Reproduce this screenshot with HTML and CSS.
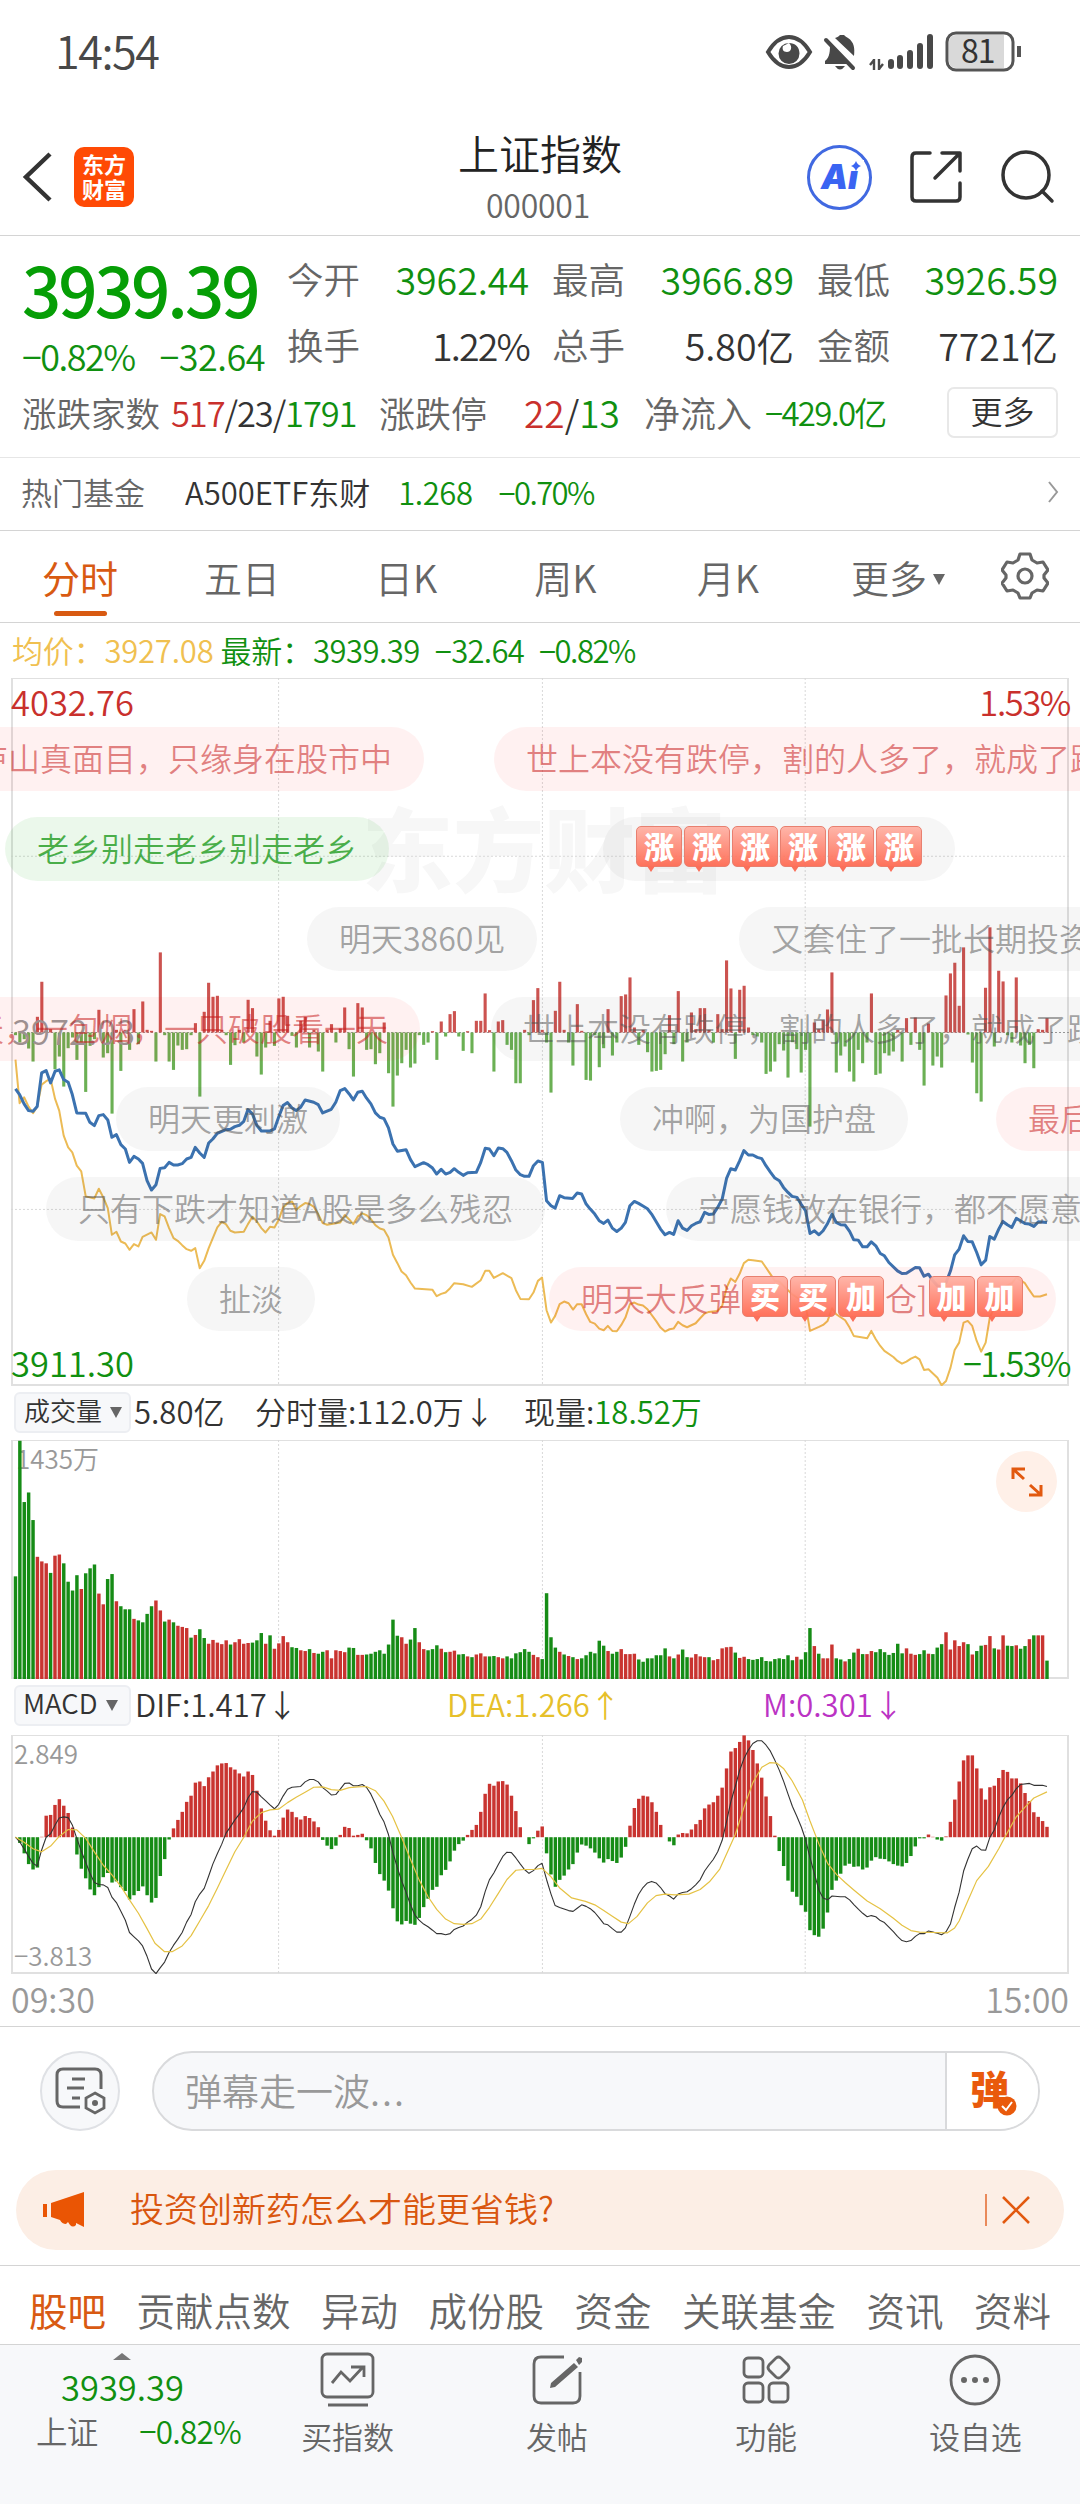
FILE: index.html
```html
<!DOCTYPE html>
<html lang="zh-CN">
<head>
    <meta charset="UTF-8">
    <meta name="viewport" content="width=device-width, initial-scale=1.0">
    <title>上证指数</title>

    <link rel="stylesheet" href="styles.css">
</head>
<body>
    <div class="status">
        <span class="clock">14:54</span>
        <svg class="status-icons" width="260" height="48" viewBox="0 0 260 48">
            <path d="M3 23Q12 8 24 8T45 23Q36 38 24 38T3 23Z" fill="none" stroke="#484848" stroke-width="4"/>
            <path d="M24 14a10.500 10.500 0 1 0 10.500 10.500C34.500 18 30 14 24 14c4 4 2 9-2 9s-5-3-4-6" fill="#484848"/>
            <path d="M65 14l21 21H60v-3c5-4 5-10 5-18zM70 9c2-1 3-1 5-3h4c2 2 3 2 4 3 6 4 7 10 6 18zM70 37h10q-5 7-10 0z" fill="#484848"/>
            <path d="M61 11l27 28" stroke="#484848" stroke-width="4" stroke-linecap="round"/>
            <path d="M109 30v11M109 31l-4 5M114 30v11M114 40l4-5" fill="none" stroke="#484848" stroke-width="2.400"/>
            <path d="M126 33v4M135 29v8M145 24v13M155 17v20M165 8v29" stroke="#484848" stroke-width="6" stroke-linecap="round"/>
            <rect x="182" y="4" width="66" height="37" rx="9" fill="#fff" stroke="#555" stroke-width="3"/>
            <path d="M191 6h48v33h-48q-7 0-7-7V13q0-7 7-7z" fill="#d9d9d9"/>
            <path d="M254 17v11" stroke="#555" stroke-width="4"/>
        </svg>
        <span class="battery">81</span>
    </div>

    <div class="header">
        <svg class="back" width="32" height="52" viewBox="0 0 32 52"><path d="M28 3L4 26l24 23" fill="none" stroke="#333" stroke-width="4.500"/></svg>
        <div class="logo">东方<br>财富</div>
        <div class="title">
            <h1>上证指数</h1>
            <p>000001</p>
        </div>
        <div class="actions">
            <div class="ai">Ai<svg width="16" height="14" viewBox="0 0 16 14"><path d="M0 0h16v11H0z" fill="#fff"/><path d="M8 1q1.500 4 5 5-3.500 1-5 5-1.500-4-5-5 3.500-1 5-5z" fill="#3a64f2"/></svg></div>
            <svg class="share" width="56" height="56" viewBox="0 0 56 56"><path d="M22 4H8q-4 0-4 4v40q0 4 4 4h40q4 0 4-4V34M34 4h18v18M52 4L27 29" fill="none" stroke="#333" stroke-width="3.500" stroke-linecap="round" stroke-linejoin="round"/></svg>
            <svg class="search" width="56" height="56" viewBox="0 0 56 56"><circle cx="26" cy="26" r="23" fill="none" stroke="#333" stroke-width="3.500"/><path d="M42 42l10 10" stroke="#333" stroke-width="3.500" stroke-linecap="round"/></svg>
        </div>
    </div>

    <div class="quote">
        <div class="quote-top">
            <div class="now">
                <div class="price">3939.39</div>
                <div class="change"><span>−0.82%</span><span>−32.64</span></div>
            </div>
            <div class="stats">
                <div class="stat"><label>今开</label><b class="green">3962.44</b></div>
                <div class="stat"><label>最高</label><b class="green">3966.89</b></div>
                <div class="stat"><label>最低</label><b class="green">3926.59</b></div>
                <div class="stat"><label>换手</label><b class="rate">1.22%</b></div>
                <div class="stat"><label>总手</label><b>5.80亿</b></div>
                <div class="stat"><label>金额</label><b>7721亿</b></div>
            </div>
        </div>
        <div class="breadth">
            <label class="b-label">涨跌家数</label>
            <span class="b-count"><i class="red">517</i>/23/<i class="green">1791</i></span>
            <label class="b-stop">涨跌停</label>
            <span class="b-limit"><i class="red">22</i>/<i class="green">13</i></span>
            <label class="b-flow">净流入</label>
            <span class="b-net green">−429.0亿</span>
            <button class="more">更多</button>
        </div>
    </div>

    <div class="fund">
        <label>热门基金</label>
        <span class="fund-name">A500ETF东财</span>
        <span class="fund-price green">1.268</span>
        <span class="fund-rate green">−0.70%</span>
        <svg class="arrow" width="12" height="22" viewBox="0 0 12 22"><path d="M2 1l8 10-8 10" fill="none" stroke="#999" stroke-width="2"/></svg>
    </div>

    <div class="periods">
        <span class="period active">分时</span>
        <span class="period">五日</span>
        <span class="period">日K</span>
        <span class="period">周K</span>
        <span class="period">月K</span>
        <span class="period with-caret">更多<i class="caret"></i></span>
        <svg class="gear" width="48" height="48" viewBox="0 0 48 48">
            <path d="M19 2h10l2 6 5 3 6-1 5 8-4 5v3l4 5-5 8-6-1-5 3-2 5H19l-2-5-5-3-6 1-5-8 4-5v-3l-4-5 5-8 6 1 5-3z" fill="none" stroke="#666" stroke-width="3.200" stroke-linejoin="round"/>
            <circle cx="24" cy="24" r="7" fill="none" stroke="#666" stroke-width="3.200"/>
        </svg>
    </div>

    <div class="legend">
        <span class="avg">均价：</span><span class="avg avg-num">3927.08</span>
        <span class="green">最新：</span><span class="green last-num">3939.39</span><span class="green last-diff">−32.64</span><span class="green last-rate">−0.82%</span>
    </div>

    <div class="chart main-chart">
        <div class="watermark">东方财富</div>
        <svg id="trend" viewBox="32 -1056 3072 2121" preserveAspectRatio="none"></svg>
        <span class="tl red">4032.76</span>
        <span class="tr red">1.53%</span>
        <span class="ml">3972.03</span>
        <span class="bl green">3911.30</span>
        <span class="br green">−1.53%</span>
        <div class="barrage" id="barrage"></div>
    </div>

    <div class="indicator">
        <span class="select">成交量<i class="caret"></i></span>
        <span class="v1">5.80亿</span>
        <span class="v2">分时量:112.0万↓</span>
        <span>现量:<i class="green">18.52万</i></span>
    </div>
    <div class="chart vol-chart">
        <span class="tl">1435万</span>
        <svg id="volume" viewBox="32 26 3072 624" preserveAspectRatio="none"></svg>
        <div class="expand"><svg width="32" height="32" viewBox="0 0 32 32"><path d="M2 13V3h12M3 4l10 9M30 19v10H18M29 28l-10-9" fill="none" stroke="#e2590f" stroke-width="3"/></svg></div>
    </div>

    <div class="indicator macd">
        <span class="select">MACD<i class="caret"></i></span>
        <span class="m1">DIF:1.417↓</span>
        <span class="m2">DEA:1.266↑</span>
        <span class="m3">M:0.301↓</span>
    </div>
    <div class="chart macd-chart">
        <svg id="macd" viewBox="32 796 3072 622" preserveAspectRatio="none"></svg>
        <span class="tl">2.849</span>
        <span class="bl">−3.813</span>
    </div>
    <div class="times"><span>09:30</span><span>15:00</span></div>

    <div class="compose">
        <div class="setting">
            <svg width="52" height="50" viewBox="0 0 52 50">
                <path d="M26 41H9q-6 0-6-6V9q0-6 6-6h32q6 0 6 6v14" fill="none" stroke="#666" stroke-width="3"/>
                <path d="M18 13h13M13 22h17M18 32h8" stroke="#666" stroke-width="3"/>
                <path d="M41 27l9 5v10l-9 5-9-5V32z" fill="none" stroke="#666" stroke-width="2.800"/><circle cx="41" cy="37" r="3" fill="#666"/>
            </svg>
        </div>
        <div class="input">
            <span>弹幕走一波<i class="dots">...</i></span>
            <div class="toggle">弹<svg width="20" height="20" viewBox="0 0 20 20"><circle cx="10" cy="10" r="9.500" fill="#e95a0c"/><path d="M5 10l4 4 6-8" fill="none" stroke="#fff" stroke-width="2"/></svg></div>
        </div>
    </div>

    <div class="notice">
        <svg width="42" height="36" viewBox="0 0 42 36"><path d="M0 12h4v13H0zM8 11L41 0v35l-8-4v2q-3 3-6 0l-2-3-2 2q-4 0-6-4l-9-3z" fill="#ea5504"/></svg>
        <span class="notice-text">投资创新药怎么才能更省钱?</span>
        <span class="notice-line"></span>
        <svg width="30" height="30" viewBox="0 0 30 30"><path d="M2 2l26 26M28 2L2 28" stroke="#e2590f" stroke-width="2.600"/></svg>
    </div>

    <div class="boards">
        <span class="active">股吧</span><span>贡献点数</span><span>异动</span><span>成份股</span><span>资金</span><span>关联基金</span><span>资讯</span><span>资料</span>
    </div>

    <div class="footer">
        <div class="index">
            <i class="up"></i>
            <div class="index-price">3939.39</div>
            <div class="index-row"><span>上证</span><span class="green">−0.82%</span></div>
        </div>
        <div class="nav">
            <svg width="56" height="56" viewBox="0 0 56 56"><rect x="2" y="2" width="51" height="43" rx="5"/><path d="M8 53h40M12 31l9-11 9 9 13-14M31 15h13v10"/></svg>
            <span>买指数</span>
        </div>
        <div class="nav">
            <svg width="56" height="56" viewBox="0 0 56 56"><path d="M35 5H12q-7 0-7 7v32q0 7 7 7h32q7 0 7-7V20"/><path class="fill" d="M45 11l4 4-23 20-5 1 1-5zM47 8l3-3 3 1v4l-3 3z"/></svg>
            <span>发帖</span>
        </div>
        <div class="nav">
            <svg width="56" height="56" viewBox="0 0 56 56"><rect x="6" y="6" width="19" height="19" rx="4"/><rect x="6" y="31" width="19" height="19" rx="4"/><rect x="31" y="31" width="19" height="19" rx="4"/><path d="M38 6q2.500-2 5 0l7 7q2 2.500 0 5l-7 7q-2.500 2-5 0l-7-7q-2-2.500 0-5z"/></svg>
            <span>功能</span>
        </div>
        <div class="nav">
            <svg width="56" height="56" viewBox="0 0 56 56"><circle cx="28" cy="28" r="24"/><path class="fill" d="M14 28a3 3 0 1 1 6 0 3 3 0 0 1-6 0zm11 0a3 3 0 1 1 6 0 3 3 0 0 1-6 0zm11 0a3 3 0 1 1 6 0 3 3 0 0 1-6 0z"/></svg>
            <span>设自选</span>
        </div>
    </div>

    <script src="script.js"></script>
</body>
</html>
```
FILE: styles.css
```css
* {
    box-sizing: border-box;
}
body {
    margin: 0;
    width: 1080px;
    background-color: #fff;
    color: #333;
    font-family: "Noto Sans CJK SC", "Noto Sans", sans-serif;
    font-weight: 350;
    overflow-x: hidden;
}
i, b, h1 {
    font-style: normal;
    font-weight: inherit;
}
span, label {
    white-space: nowrap;
}
svg {
    flex-shrink: 0;
}
.red {
    color: #c9302c;
}
.green {
    color: #109010;
}

/* status bar */
.status {
    position: relative;
    display: flex;
    align-items: center;
    height: 105px;
    padding: 0 56px 0 55px;
}
.clock {
    font-size: 45px;
    letter-spacing: -1.5px;
    font-weight: 350;
    color: #484848;
    line-height: 60px;
    padding-bottom: 5px;
}
.status-icons {
    margin-left: auto;
    margin-right: -1px;
}
.battery {
    position: absolute;
    left: 961px;
    top: 29px;
    font-size: 32px;
    line-height: 40px;
    font-weight: 400;
    letter-spacing: -1px;
}

/* header */
.header {
    position: relative;
    display: flex;
    align-items: center;
    height: 131px;
    padding: 14px 24px 0 22px;
    border-bottom: 1px solid #d4d4d4;
}
.logo {
    margin-left: 20px;
    width: 60px;
    height: 60px;
    padding-top: 4px;
    border-radius: 10px;
    background-color: #ff4a05;
    color: #fff;
    text-align: center;
    font-size: 22px;
    line-height: 25px;
    font-weight: 700;
}
.title {
    position: absolute;
    left: 340px;
    width: 400px;
    top: 22px;
    text-align: center;
}
.title h1 {
    margin: 0;
    font-size: 41px;
    line-height: 50px;
    color: #222;
}
.title p {
    margin: 8px 4px 0 0;
    font-size: 32px;
    line-height: 38px;
    letter-spacing: -.2px;
    color: #666;
}
.actions {
    display: flex;
    align-items: center;
    margin-left: auto;
}
.ai {
    position: relative;
    width: 65px;
    height: 65px;
    border: 3px solid #4169e1;
    border-radius: 50%;
    padding-left: 11px;
    font: italic 900 34px/58px Inter, sans-serif;
    color: #3a64f2;
}
.ai svg {
    position: absolute;
    right: 5px;
    top: 12px;
}
.share, .search {
    margin-left: 36px;
}

/* quote */
.quote {
    height: 222px;
    border-bottom: 1px solid #e6e6e6;
}
.quote-top {
    display: flex;
    height: 147px;
    padding-left: 22px;
}
.now {
    width: 266px;
}
.price {
    margin-top: 17px;
    font-size: 69px;
    line-height: 70px;
    font-weight: 500;
    letter-spacing: -3px;
    color: #069e06;
}
.change {
    display: flex;
    justify-content: space-between;
    width: 243px;
    margin-top: 11px;
    font-size: 36px;
    line-height: 42px;
    letter-spacing: -1.5px;
    color: #109010;
}
.change span + span {
    letter-spacing: -.5px;
}
.stats {
    display: grid;
    grid-template-columns: 241px 241px 240px;
    grid-template-rows: 66px 66px;
    column-gap: 24px;
    padding-top: 10px;
    margin-left: -1px;
}
.stat {
    display: flex;
    justify-content: space-between;
    font-size: 36.500px;
    line-height: 66px;
}
.stat b {
    margin-right: -1px;
    font-size: 37.500px;
}
.stat .rate {
    letter-spacing: -1.8px;
}
label {
    color: #666;
}
.breadth {
    display: flex;
    align-items: center;
    height: 58px;
    padding: 0 22px 0 22px;
    font-size: 34.500px;
}
.b-count {
    width: 208px;
    margin-left: 11px;
    letter-spacing: -1.1px;
}
.b-stop, .b-flow {
    font-size: 36px;
}
.b-limit {
    width: 119px;
    padding-left: 37px;
    margin-right: 38px;
    font-size: 37px;
}
.b-net {
    margin-left: 13px;
    font-size: 33px;
    letter-spacing: -1.7px;
}
.more {
    margin-left: auto;
    width: 111px;
    height: 51px;
    padding: 0 0 5px;
    border: 2px solid #e8e8e8;
    border-radius: 7px;
    background-color: #fff;
    font: inherit;
    font-size: 32px;
    line-height: 40px;
    color: #333;
}
.fund {
    display: flex;
    align-items: center;
    height: 73px;
    padding: 0 21px 5px;
    border-bottom: 1px solid #d4d4d4;
    font-size: 31px;
}
.fund-name {
    margin-left: 40px;
}
.fund-price {
    margin: 0 26px 0 28px;
    letter-spacing: -.4px;
}
.fund-rate {
    letter-spacing: -1.6px;
}
.arrow {
    margin-left: auto;
}

/* period tabs */
.periods {
    position: relative;
    display: flex;
    align-items: center;
    height: 92px;
    padding-left: 42px;
    border-bottom: 1px solid #d4d4d4;
    font-size: 38px;
    color: #666;
}
.period {
    margin-right: 97px;
    line-height: 82px;
}
.period:nth-child(1) {
    margin-right: 86px;
}
.period:nth-child(2) {
    margin-right: 95px;
}
.period:nth-child(4) {
    margin-right: 100px;
}
.period.active {
    position: relative;
    color: #d85a12;
    font-weight: 400;
}
.period.active::after {
    content: '';
    position: absolute;
    left: 12px;
    bottom: 2px;
    width: 53px;
    height: 5px;
    border-radius: 3px;
    background-color: #d85a12;
}
.period.with-caret {
    margin: 0 0 0 -5px;
}
.caret {
    display: inline-block;
    margin-left: 6px;
    border: 6px solid transparent;
    border-top: 11px solid #666;
    border-bottom: 0;
    vertical-align: 8px;
}
.gear {
    position: absolute;
    left: 1001px;
    top: 21px;
}
.legend {
    display: flex;
    align-items: center;
    height: 55px;
    padding: 0 0 2px 12px;
    font-size: 31px;
}
.avg {
    color: #f0c050;
}
.avg-num {
    margin-right: 7px;
}
.avg, .legend .green {
    letter-spacing: -.2px;
}
.legend .last-num {
    letter-spacing: -.5px;
}
.legend .last-diff {
    margin: 0 15px 0 15px;
    letter-spacing: -.7px;
}
.legend .last-rate {
    letter-spacing: -1.5px;
}

/* charts */
.chart {
    position: relative;
    height: 239px;
    margin: 0 11px;
    border: 2px solid #e0e0e0;
    border-top-width: 1px;
}
.chart > svg {
    position: absolute;
    left: -2px;
    top: -1px;
    width: 1058px;
    height: calc(100% + 3px);
}
.chart > span {
    position: absolute;
    line-height: 40px;
}
.main-chart {
    height: 708px;
    font-size: 34.500px;
}
.main-chart .tl {
    left: -2px;
    top: 2px;
}
.main-chart .tr {
    right: -3px;
    top: 2px;
    letter-spacing: -1.4px;
}
.main-chart .ml {
    left: -1px;
    top: 331px;
    color: #999;
}
.main-chart .bl {
    left: -2px;
    bottom: 2px;
}
.main-chart .br {
    right: -3px;
    bottom: 2px;
    letter-spacing: -1.6px;
}
.watermark {
    position: absolute;
    left: 349px;
    top: 106px;
    font-size: 91px;
    line-height: 120px;
    font-weight: 900;
    color: #f7f7f7;
}
.barrage {
    position: absolute;
    left: -13px;
    right: -13px;
    top: 0;
    bottom: 0;
    overflow: hidden;
}
.pill {
    position: absolute;
    display: flex;
    align-items: center;
    height: 64px;
    padding: 0 32px 4px;
    border-radius: 32px;
    background-color: rgba(70, 75, 75, .05);
    color: rgba(80, 80, 80, .52);
    font-size: 32px;
    white-space: nowrap;
}
.pill.rise {
    background-color: rgba(255, 0, 0, .055);
    color: rgba(200, 30, 30, .55);
}
.pill.fall {
    background-color: rgba(0, 160, 0, .08);
    color: rgba(20, 150, 20, .75);
}
.emoji {
    position: relative;
    width: 46px;
    height: 41px;
    margin: 0 1px 1px;
    border-radius: 5px;
    background-image: linear-gradient(rgba(255, 178, 165, .95), rgba(255, 100, 75, .9));
    border: 1px solid #e88070;
    color: #fff;
    text-align: center;
    font-size: 30px;
    line-height: 37px;
    font-weight: 900;
}
.emoji::after {
    content: '';
    position: absolute;
    left: 10px;
    top: 39px;
    border: 4px solid transparent;
    border-top: 6px solid #fa6f5a;
    border-bottom: 0;
}
.indicator {
    display: flex;
    align-items: center;
    height: 54px;
    padding: 0 0 5px 14px;
    font-size: 31px;
}
.select {
    width: 117px;
    height: 41px;
    margin-top: 4px;
    padding-left: 8px;
    border: 2px solid #eceef2;
    border-radius: 6px;
    background-color: #f7f8fa;
    font-size: 26px;
    line-height: 31px;
}
.select .caret {
    margin-left: 8px;
    vertical-align: 3px;
}
.v1 {
    width: 121px;
    margin-left: 3px;
}
.v2 {
    width: 269px;
}
.vol-chart, .macd-chart {
    font-size: 26px;
    color: #999;
}
.vol-chart .tl {
    left: 3px;
    top: -3px;
}
.expand {
    position: absolute;
    right: 10px;
    top: 10px;
    display: flex;
    justify-content: center;
    align-items: center;
    width: 61px;
    height: 61px;
    border-radius: 50%;
    background-color: #fff0e8;
}
.indicator.macd {
    height: 56px;
    padding-bottom: 7px;
}
.macd .select {
    font-size: 27.500px;
    padding-left: 7px;
}
.m1 {
    width: 312px;
    margin-left: 4px;
}
.m2 {
    width: 316px;
    color: #e6c02a;
}
.m3 {
    color: #bb33c4;
}
.macd-chart .tl {
    left: 1px;
    top: -3px;
}
.macd-chart .bl {
    left: 1px;
    bottom: -3px;
}
.times {
    display: flex;
    justify-content: space-between;
    height: 53px;
    padding: 0 11px;
    border-bottom: 1px solid #d4d4d4;
    font-size: 34px;
    line-height: 50px;
    color: #999;
}

/* barrage input */
.compose {
    display: flex;
    height: 143px;
    padding: 24px 40px 0 40px;
}
.setting {
    display: flex;
    justify-content: center;
    align-items: center;
    width: 80px;
    height: 80px;
    border: 2px solid #dfe1e5;
    border-radius: 50%;
    background-color: #f7f8fa;
}
.input {
    display: flex;
    flex: 1;
    justify-content: space-between;
    height: 80px;
    margin-left: 32px;
    padding-left: 31px;
    border: 2px solid #d9dadc;
    border-radius: 40px;
    background-color: #f7f8fa;
    overflow: hidden;
    font-size: 37px;
    line-height: 74px;
    color: #999;
}
.dots {
    letter-spacing: 2px;
}
.toggle {
    position: relative;
    width: 93px;
    padding-left: 23px;
    border-left: 2px solid #d9dadc;
    background-color: #fff;
    font-size: 39px;
    line-height: 68px;
    font-weight: 900;
    color: #e95a0c;
}
.toggle svg {
    position: absolute;
    left: 50px;
    top: 43px;
}
.notice {
    display: flex;
    align-items: center;
    height: 80px;
    margin: 0 16px 15px;
    padding: 0 33px 0 27px;
    border-radius: 40px;
    background-color: #fceee5;
    color: #d9560f;
    font-size: 34px;
}
.notice-text {
    margin-left: 45px;
    padding-bottom: 5px;
}
.notice-line {
    width: 2px;
    height: 32px;
    margin: 0 14px 0 auto;
    background-color: #e9895a;
}

/* bottom */
.boards {
    display: flex;
    justify-content: space-between;
    height: 80px;
    padding: 0 29px;
    border-top: 1px solid #d4d4d4;
    border-bottom: 1px solid #d4d4d4;
    font-size: 38.500px;
    line-height: 86px;
    color: #666;
}
.boards .active {
    color: #d85a12;
    font-weight: 400;
}
.boards span {
    height: 76px;
}
.footer {
    display: flex;
    height: 159px;
    background-color: #f7f8fa;
}
.index {
    width: 243px;
    padding: 8px 0 0 36px;
}
.up {
    display: block;
    width: 0;
    margin-left: 77px;
    border: 9px solid transparent;
    border-top: 0;
    border-bottom: 7px solid #777;
}
.index-price {
    margin: 4px 0 0 25px;
    font-size: 34.500px;
    line-height: 44px;
    color: #109010;
}
.index-row {
    display: flex;
    justify-content: space-between;
    width: 205px;
    font-size: 31.500px;
    line-height: 44px;
    color: #666;
    letter-spacing: -.8px;
}
.nav {
    display: flex;
    flex-direction: column;
    align-items: center;
    flex: 1;
    padding-top: 7px;
    font-size: 31px;
    line-height: 44px;
    color: #666;
}
.nav svg {
    margin-bottom: 6px;
    fill: none;
    stroke: #666;
    stroke-width: 2.800;
}
.nav .fill {
    fill: #666;
    stroke: none;
}
```
FILE: script.js
```js
// x of the bar for minute i, in chart units
const STEP = 12.745
const minuteX = i => 45 + STEP * i
const RED = '#c93430'
const GREEN = '#168c16'
const GRID_X = [809, 1575, 2338]

// strength bars round the previous close
const strength = [
    -8, -30, -20, -48, -87, 47, 152, 10, 10, -110, -72, -162, -47, -15, -82, -30, -178, -40, -20, 68,
    -75, -62, -243, 8, -115, 8, -52, 70, -35, 93, 8, 5, -87, 240, -8, -87, -112, -39, -52, -50,
    -8, 28, -192, 62, 149, 107, 110, 8, -8, -97, -38, 8, -30, 98, 73, -72, -126, -45, 35, -40,
    102, 107, 50, -10, -45, 35, 47, -45, 8, -57, -117, 8, 25, -30, 12, 75, -50, -132, 88, 75,
    -52, -50, -95, -62, 30, -122, -222, -129, -92, -52, -105, -93, -8, -37, -30, 4, -82, 33, -12, 55,
    64, -12, -55, 4, -62, 35, 35, 117, 7, -117, 33, 37, -37, -52, -152, -152, 8, -8, 97, 133,
    8, -30, -180, 65, 152, 8, -30, -99, 85, 5, -142, -144, -8, -104, -47, 70, -69, -30, 109, 114,
    165, 15, -37, 8, -59, -117, -115, -112, -65, 52, -35, 124, -87, -30, 60, 10, 73, 73, 8, -30,
    55, 10, 216, 132, -79, 128, 140, 15, -8, -12, -30, -124, -117, -87, -35, -54, -135, -29, -50, -120,
    -52, -282, 30, 10, 37, 69, 180, -120, -69, -42, -117, -147, -52, -92, -30, 117, -127, -123, -62, -69,
    -57, 8, -87, 43, -37, 45, -52, -159, 27, -99, -72, -105, 111, 177, 209, 80, 255, -6, -90, -182,
    -207, 134, 315, -42, 185, 153, -8, -30, 165, -39, -92, -37, -107, 10, 8, 43
]

// minute volume, negative when the price fell
const volumes = [
    -268, -622, -462, -487, -415, 319, 307, 302, -277, 322, 325, -302, -254, -231, -271, 235, -276, -289, -299, 223,
    195, -261, -274, 203, -190, -182, -182, 157, -153, -148, -170, -190, 205, 179, -150, 155, -148, 139, 136, 133,
    -108, 115, -130, -107, 92, 102, 95, 91, 101, -90, 96, 104, 92, 94, -95, -101, -120, 92, -114, 79,
    93, 112, 96, -83, -81, 75, 73, -78, 68, -66, -71, 75, 54, 75, 73, 70, -82, -81, 63, 63,
    -64, -66, -71, -75, -66, -90, -155, -113, 109, 92, -103, -133, 96, 78, -75, -78, -88, 79, -70, 71,
    74, -64, -65, 59, -57, 64, 67, 59, -59, -60, 57, 54, -59, -54, -67, -70, -78, -71, 63, 57,
    -52, -224, -109, -82, 71, -64, 60, -57, 52, -54, -62, -71, -67, -100, -87, 73, -66, -71, 78, 65,
    65, 66, -51, -45, -54, -54, -62, -62, -80, 59, -54, 64, -77, -57, 56, 65, 59, 57, -57, 49,
    52, 80, 83, 84, -69, 55, 58, -52, -50, -52, -57, -47, -46, -52, -54, -52, -62, -49, 58, -51,
    -70, -133, 86, -66, 54, 54, 90, -54, -51, 46, -52, -69, 79, -65, 65, 73, -70, -78, -70, -63,
    -68, -92, -67, 80, 66, 63, -65, -75, 66, -65, -82, -91, 122, 77, 101, 86, 96, -91, 64, -73,
    -87, 89, 112, -80, 77, 114, -87, -86, 88, -79, -86, 104, -114, 114, 114, -48
]

const macdBars = [
    0, -15, -42, -70, -84, -79, 1, 56, 58, 84, 99, 82, 63, 25, -45, -82, -107, -136, -151, -130,
    -104, -93, -118, -115, -130, -140, -162, -151, -140, -128, -151, -170, -158, -101, -57, -6, 23, 45, 66, 92,
    108, 142, 145, 133, 156, 171, 187, 192, 193, 182, 176, 166, 158, 171, 162, 121, 75, 43, 18, 4,
    19, 51, 72, 66, 52, 46, 55, 50, 41, 26, -7, -22, -31, -22, 6, 27, 24, 4, 6, 9,
    -8, -29, -67, -96, -113, -139, -185, -219, -227, -218, -225, -228, -210, -182, -160, -137, -129, -99, -85, -63,
    -35, -18, -9, 6, 19, 32, 66, 113, 139, 134, 145, 146, 137, 108, 68, 26, 0, -18, -3, 17,
    28, -42, -97, -129, -111, -100, -84, -70, -40, -19, -22, -29, -40, -55, -66, -57, -62, -67, -53, -25,
    30, 76, 100, 108, 106, 91, 66, 32, 0, -11, -21, 7, 11, 10, 20, 34, 45, 75, 85, 91,
    108, 129, 179, 223, 232, 248, 265, 252, 227, 192, 155, 106, 55, 4, -36, -75, -113, -142, -155, -177,
    -194, -242, -255, -259, -238, -196, -137, -113, -95, -74, -69, -77, -76, -84, -79, -61, -52, -56, -57, -63,
    -70, -74, -76, -67, -49, -24, -3, -3, 7, 1, -6, -9, 2, 40, 98, 145, 200, 213, 213, 179,
    127, 98, 130, 134, 154, 175, 170, 153, 153, 140, 115, 94, 65, 53, 42, 27
]

const priceLine = `45,175 57,192 70,220 83,240 96,242 108,228 121,127 134,120 147,157 160,122 172,118 185,147 198,155 210,192 223,247 249,248
261,275 274,285 287,255 300,252 313,268 325,320 338,312 351,342 364,355 376,395 389,377 402,385 414,398 427,450 440,478 453,462
465,413 478,411 491,395 504,403 516,403 529,399 542,385 555,380 567,350 580,367 593,380 606,337 618,325 631,308 656,297 669,296
682,288 695,284 708,272 720,237 733,250 746,285 759,301 784,301 797,295 809,260 822,225 835,216 848,232 860,240 873,230 886,208
911,215 924,222 937,247 962,236 975,215 988,180 1001,174 1014,190 1026,208 1039,185 1052,182 1064,202 1077,220 1090,247 1103,260
1115,264 1128,292 1141,340 1154,362 1179,357 1192,387 1205,408 1230,396 1243,402 1256,412 1268,430 1281,416 1294,430 1307,425
1319,414 1332,425 1345,434 1358,426 1383,425 1396,395 1409,353 1421,355 1434,375 1447,352 1460,354 1472,365 1485,390 1498,418
1511,432 1523,437 1536,437 1549,405 1562,391 1575,395 1587,510 1600,525 1612,532 1625,495 1638,501 1663,503 1676,487 1689,490
1702,520 1714,535 1727,550 1740,570 1753,578 1765,568 1778,592 1791,602 1804,592 1816,575 1829,525 1842,512 1854,518 1867,526
1880,534 1892,550 1905,572 1918,595 1931,612 1944,605 1956,611 1969,570 1982,592 1995,599 2008,585 2020,578 2033,573 2046,545
2058,551 2071,550 2084,530 2097,505 2110,442 2122,414 2135,418 2148,390 2160,360 2173,373 2186,373 2199,380 2212,384 2224,405
2237,424 2250,442 2263,450 2275,470 2288,485 2300,497 2314,500 2326,520 2339,540 2352,608 2365,600 2378,612 2390,600 2403,578
2416,550 2428,575 2441,582 2454,583 2467,602 2479,627 2492,628 2505,648 2518,648 2530,633 2543,645 2556,668 2568,675 2581,695
2606,720 2619,728 2632,727 2658,710 2670,711 2683,736 2696,730 2709,750 2722,765 2734,768 2747,755 2760,720 2772,672 2785,655
2798,615 2810,632 2823,633 2836,665 2849,702 2862,688 2874,617 2887,625 2900,595 2912,572 2925,582 2938,590 2951,563 2963,570
2976,578 2989,580 3002,587 3015,573 3040,575`

const averageLine = `45,87 57,218 70,200 83,228 96,248 108,228 121,162 134,152 147,145 160,205 172,240 185,315 198,350 210,365 223,405 236,422
249,497 274,503 287,474 300,500 313,532 325,612 338,603 351,632 364,638 376,657 389,640 402,647 414,618 440,605 453,627 465,550
478,557 491,592 504,622 516,630 529,643 542,655 555,660 567,652 580,712 593,690 606,652 618,622 631,590 644,573 656,580 669,600
682,605 708,603 720,580 733,558 746,572 759,592 771,605 784,588 797,590 809,568 822,530 835,517 848,512 860,538 873,526 886,517
899,520 911,528 924,550 937,577 950,582 988,575 1001,553 1014,566 1026,580 1039,557 1052,548 1064,553 1077,565 1090,583 1103,593
1115,597 1128,620 1141,672 1154,697 1166,722 1179,733 1192,755 1205,773 1256,777 1268,796 1281,789 1294,785 1307,772 1319,757
1345,760 1370,768 1396,748 1409,720 1421,720 1434,741 1460,727 1485,742 1498,778 1511,804 1536,805 1549,785 1562,750 1574,740
1587,838 1600,875 1612,855 1625,820 1638,812 1651,817 1664,836 1676,820 1689,820 1702,850 1714,873 1727,878 1740,893 1753,898
1765,885 1778,900 1791,901 1804,882 1816,860 1829,820 1842,815 1854,821 1867,824 1880,835 1905,870 1918,890 1931,902 1944,895
1956,893 1969,873 1982,883 1995,889 2020,877 2033,862 2046,848 2058,843 2084,840 2097,825 2110,770 2122,743 2135,753 2148,728
2160,697 2173,687 2186,688 2212,692 2224,710 2237,730 2250,750 2263,752 2275,765 2300,790 2314,800 2339,820 2352,900 2378,888
2390,882 2403,870 2416,832 2428,850 2454,868 2467,890 2479,915 2518,922 2530,900 2543,925 2556,945 2568,960 2594,978 2606,990
2619,998 2632,992 2645,983 2658,977 2670,985 2683,1017 2696,1015 2722,1040 2734,1063 2747,1050 2760,1010 2772,957 2785,935
2798,875 2810,870 2823,885 2836,930 2849,962 2862,935 2874,860 2900,800 2912,770 2938,757 2951,740 2976,757 2989,778 3002,797
3020,797 3040,790`

const difLine = `45,1062 58,1075 72,1095 83,1112 96,1130 108,1137 120,1098 134,1062 147,1053 160,1030 172,1012 185,1009 198,1011 210,1030
223,1065 236,1098 249,1128 261,1155 274,1180 287,1185 300,1186 313,1193 325,1218 338,1232 351,1255 364,1278 376,1310 390,1322
402,1332 414,1345 427,1372 440,1405 453,1417 465,1402 478,1387 491,1362 504,1343 516,1328 529,1310 542,1283 555,1263 567,1230
580,1210 593,1195 606,1163 618,1132 631,1105 644,1080 656,1052 669,1035 682,1017 695,1002 708,985 720,960 733,943 746,945
759,957 771,967 784,978 797,988 809,977 822,955 835,937 848,932 873,930 886,918 899,912 911,912 924,918 937,933 950,942 962,952
975,951 988,937 1001,922 1014,921 1026,928 1039,928 1052,925 1064,932 1077,950 1090,975 1103,1003 1115,1022 1128,1055 1141,1102
1154,1142 1166,1175 1179,1205 1192,1238 1205,1265 1217,1278 1230,1288 1243,1295 1256,1304 1268,1313 1281,1313 1294,1316
1307,1313 1319,1302 1332,1297 1345,1293 1358,1283 1370,1276 1383,1265 1396,1243 1409,1203 1421,1173 1434,1155 1447,1133
1460,1112 1472,1101 1485,1102 1498,1116 1511,1132 1523,1146 1536,1156 1549,1149 1562,1136 1574,1130 1587,1172 1600,1210
1612,1240 1625,1245 1638,1249 1651,1253 1664,1255 1676,1247 1689,1238 1702,1242 1714,1248 1727,1258 1740,1272 1753,1287
1765,1290 1778,1300 1791,1309 1804,1309 1816,1298 1829,1268 1842,1236 1854,1211 1867,1193 1880,1181 1892,1177 1905,1181
1918,1193 1931,1209 1944,1215 1956,1223 1969,1210 1982,1206 1995,1204 2008,1196 2020,1186 2033,1173 2046,1150 2058,1135
2071,1120 2084,1100 2097,1070 2110,1020 2122,970 2135,930 2148,887 2160,858 2173,835 2186,818 2199,811 2212,811 2224,822
2237,838 2250,862 2263,888 2276,918 2289,952 2301,982 2314,1008 2327,1036 2339,1068 2352,1115 2365,1158 2378,1200 2390,1220
2403,1225 2416,1215 2440,1217 2454,1217 2467,1225 2480,1238 2493,1250 2505,1260 2518,1269 2530,1266 2543,1269 2556,1279
2568,1284 2581,1296 2594,1308 2606,1320 2619,1331 2632,1334 2645,1331 2658,1320 2670,1313 2683,1313 2696,1306 2709,1309
2722,1312 2734,1316 2747,1308 2760,1287 2772,1245 2785,1205 2798,1150 2810,1120 2823,1092 2836,1085 2849,1095 2862,1096
2874,1063 2887,1043 2900,1010 2912,985 2925,965 2938,953 2950,937 2963,925 2989,922 3002,927 3027,927 3040,930`

const deaLine = `45,1062 70,1075 96,1092 121,1100 147,1085 172,1060 198,1042 223,1043 249,1065 274,1100 300,1135 325,1160 351,1190
376,1225 402,1260 427,1300 450,1338 478,1360 500,1360 529,1345 555,1318 580,1280 606,1240 631,1195 656,1148 682,1100 708,1062
733,1020 759,998 784,991 809,989 835,972 860,958 886,945 911,932 937,931 962,938 988,940 1014,933 1039,931 1064,930 1090,941
1115,968 1140,1008 1166,1062 1192,1120 1217,1173 1243,1217 1268,1250 1294,1275 1319,1287 1345,1289 1370,1287 1396,1275
1421,1245 1447,1208 1472,1172 1498,1148 1523,1146 1549,1146 1574,1143 1600,1165 1626,1195 1660,1220 1700,1229 1727,1238
1753,1253 1778,1268 1804,1283 1825,1287 1850,1268 1880,1233 1905,1214 1930,1210 1960,1212 2000,1210 2033,1198 2060,1178
2090,1145 2110,1105 2135,1055 2160,985 2186,920 2212,880 2235,868 2255,869 2275,883 2300,915 2330,965 2352,1020 2378,1080
2403,1130 2430,1160 2454,1180 2480,1200 2518,1228 2556,1248 2594,1273 2619,1291 2645,1305 2670,1309 2710,1310 2750,1311
2772,1298 2785,1280 2810,1228 2836,1175 2870,1138 2900,1092 2925,1050 2950,1010 2975,985 3002,960 3040,944`

function bars(values, base, width, up, down, signed = true) {
    return values.map((v, i) => {
        const h = Math.abs(v)
        const y = signed && v < 0 ? base : base - h
        return `<rect x="${(minuteX(i) - width / 2).toFixed(1)}" y="${y}" width="${width}" height="${h}" fill="${v < 0 ? down : up}"/>`
    }).join('')
}
function line(points, color, width) {
    return `<polyline points="${points}" fill="none" stroke="${color}" stroke-width="${width}" stroke-linejoin="round" vector-effect="non-scaling-stroke"/>`
}
function dotted(x1, y1, x2, y2, color = '#d8d8d8') {
    return `<line x1="${x1}" y1="${y1}" x2="${x2}" y2="${y2}" stroke="${color}" stroke-width="1" stroke-dasharray="2 2" vector-effect="non-scaling-stroke"/>`
}
function columns(top, bottom) {
    return GRID_X.map(x => dotted(x, top, x, bottom)).join('')
}

document.querySelector('#trend').innerHTML =
    columns(-1056, 1065) + dotted(32, -522, 3104, -522) + dotted(32, 6, 3104, 6, '#999') + dotted(32, 536, 3104, 536) +
    bars(strength, 6, 9, '#cc5350', '#6bb054') +
    line(averageLine, '#ecbb55', 2) + line(priceLine, '#3b72b0', 3)

document.querySelector('#volume').innerHTML = columns(26, 650) + bars(volumes, 650, 10, RED, GREEN, false)

document.querySelector('#macd').innerHTML =
    columns(796, 1418) + bars(macdBars, 1062, 10, RED, GREEN) + line(difLine, '#333', 1.1) + line(deaLine, '#e5c244', 1.2)

// [row, left, type, text]; characters in {} are drawn as emoji bubbles
const messages = [
    [0, -120, 'rise', '不识庐山真面目，只缘身在股市中'],
    [0, 494, 'rise', '世上本没有跌停，割的人多了，就成了跌停'],
    [1, 5, 'fall', '老乡别走老乡别走老乡'],
    [1, 603, '', '{涨}{涨}{涨}{涨}{涨}{涨}'],
    [2, 307, '', '明天3860见'],
    [2, 739, '', '又套住了一批长期投资者'],
    [3, -60, 'rise', '天，一包烟，一只破股看一天'],
    [3, 491, '', '世上本没有跌停，割的人多了，就成了跌停'],
    [4, 116, '', '明天更刺激'],
    [4, 620, '', '冲啊，为国护盘'],
    [4, 996, 'rise', '最后一跌'],
    [5, 46, '', '只有下跌才知道A股是多么残忍'],
    [5, 666, '', '宁愿钱放在银行，都不愿意买股'],
    [6, 187, '', '扯淡'],
    [6, 549, 'rise', '明天大反弹{买}{买}{加}仓]{加}{加}']
]
document.querySelector('#barrage').innerHTML = messages.map(([row, left, type, text]) => {
    const body = text.replace(/\{(.)\}/g, '<span class="emoji">$1</span>')
    return `<div class="pill ${type}" style="left:${left}px;top:${48 + row * 90}px">${body}</div>`
}).join('')
```
